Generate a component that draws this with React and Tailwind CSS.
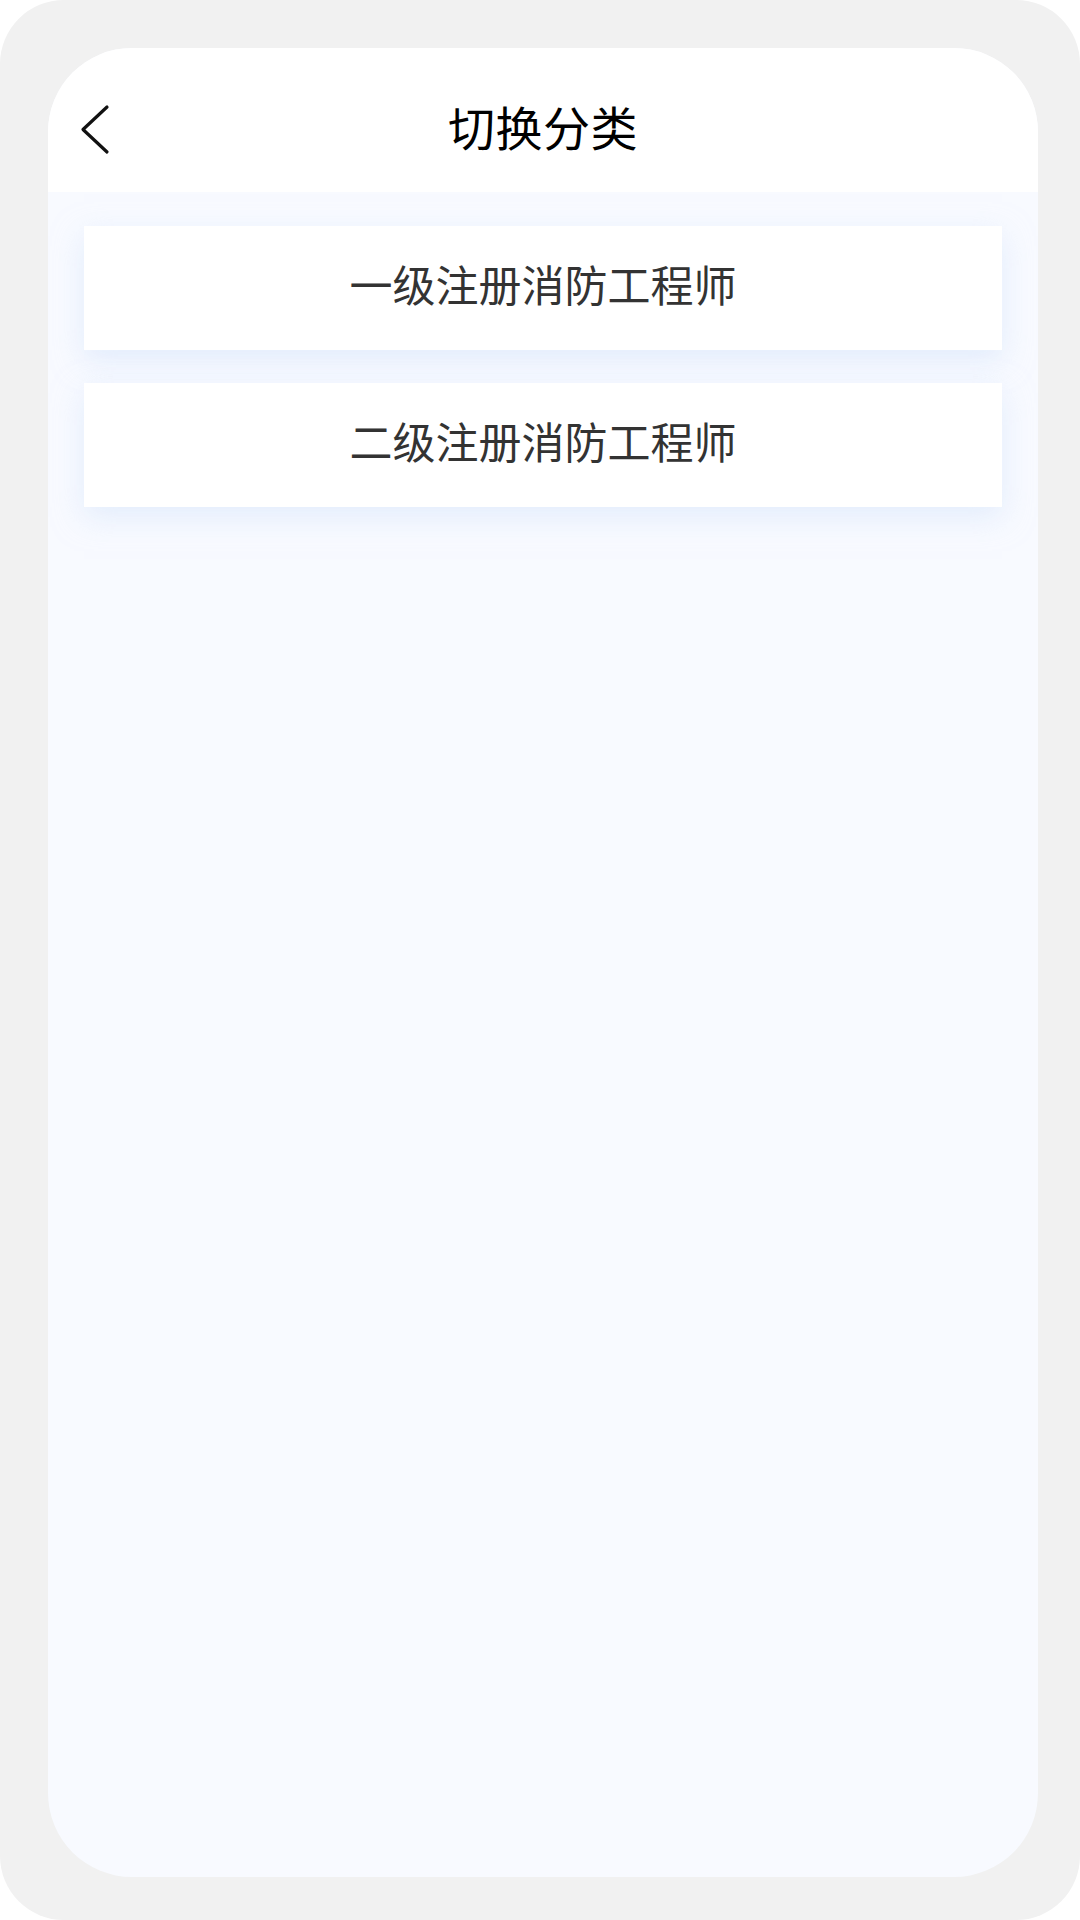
const items = ["一级注册消防工程师", "二级注册消防工程师"];

const BackIcon = () => (
    <svg width="32" height="52" viewBox="0 0 32 52" fill="none" xmlns="http://www.w3.org/2000/svg">
        <path d="M28 3L4 25.5L28 48" stroke="#111" strokeWidth="3.2" strokeLinecap="round" strokeLinejoin="round" />
    </svg>
);

const App = () => {
    return (
        <div className="w-[1080px] h-[1920px] bg-white font-['Noto_Sans_CJK_SC','Noto_Sans',sans-serif]">
            <div className="h-full rounded-[64px] bg-[#f1f1f1] pt-[48px] pl-[48px] pr-[42px] pb-[43px]">
                <div className="h-full rounded-[84px] bg-[#f8faff] overflow-hidden flex flex-col">
                    {/* header */}
                    <div className="h-[144px] shrink-0 bg-white pt-[20px] grid grid-cols-[1fr_auto_1fr] items-center">
                        <div className="pl-[31px] flex items-center">
                            <BackIcon />
                        </div>
                        <h1 className="mb-[10px] text-[47px] leading-none text-black tracking-[0.5px]">切换分类</h1>
                        <div />
                    </div>
                    {/* list */}
                    <div className="px-[36px] pt-[34px] flex flex-col gap-[33px]">
                        {items.map((name) => (
                            <div
                                key={name}
                                className="h-[124px] pb-[10px] bg-white flex items-center justify-center text-[43px] leading-none text-[#333] shadow-[0_10px_28px_rgba(210,225,250,0.55)]"
                            >
                                {name}
                            </div>
                        ))}
                    </div>
                </div>
            </div>
        </div>
    );
};

export default App;
